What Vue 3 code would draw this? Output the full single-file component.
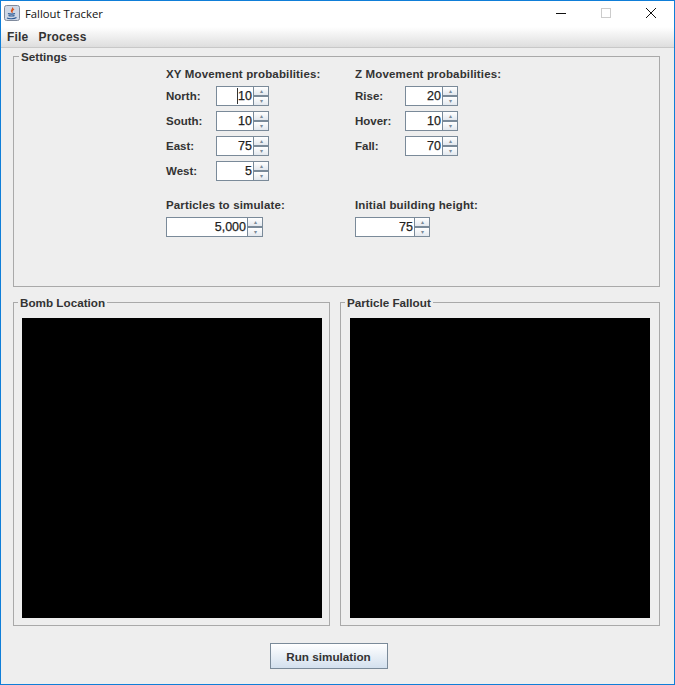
<template>
  <div class="window">
    <header class="titlebar">
      <svg class="app-icon" width="16" height="16" viewBox="0 0 16 16">
        <rect x="0.5" y="0.5" width="15" height="15" rx="2" fill="#cfd8e6" stroke="#7f8a9c" />
        <path d="M8.5 2.5c1 1.5-2 2.5-1 4 .3.5.8.8 1 1.2M10 4c-1 .8-2 1.300-1.500 2.500" fill="none" stroke="#d9541e" stroke-width="1.200" />
        <path d="M4 8.500c1 .8 6 .8 7 0M4.500 10.500c1 .7 5 .7 6 0M3 13c2 1 7 1 9.500-.5" fill="none" stroke="#2c5a94" stroke-width="1.100" />
      </svg>
      <span class="title">Fallout Tracker</span>
      <div class="controls">
        <span class="ctl"><svg width="12" height="12" viewBox="0 0 12 12"><path d="M1 6.500h10" stroke="#111" /></svg></span>
        <span class="ctl"><svg width="12" height="12" viewBox="0 0 12 12"><rect x="1.500" y="1.500" width="9" height="9" fill="none" stroke="#ccc" /></svg></span>
        <span class="ctl"><svg width="12" height="12" viewBox="0 0 12 12"><path d="M1 1l10 10M11 1L1 11" stroke="#111" /></svg></span>
      </div>
    </header>

    <nav class="menubar">
      <span>File</span>
      <span>Process</span>
    </nav>

    <main class="content">
      <fieldset class="group settings">
        <legend>Settings</legend>
        <div class="settings-grid">
          <section class="col">
            <h4>XY Movement probabilities:</h4>
            <div v-for="row in xyRows" :key="row.label" class="row">
              <label>{{ row.label }}</label>
              <div class="spinner">
                <div class="field" :class="{ caret: row.focus }"><span>{{ row.value }}</span></div>
                <div class="arrows"><button>&#9652;</button><button>&#9662;</button></div>
              </div>
            </div>
            <h4 class="second">Particles to simulate:</h4>
            <div class="spinner wide">
              <div class="field"><span>5,000</span></div>
              <div class="arrows"><button>&#9652;</button><button>&#9662;</button></div>
            </div>
          </section>

          <section class="col">
            <h4>Z Movement probabilities:</h4>
            <div v-for="row in zRows" :key="row.label" class="row">
              <label>{{ row.label }}</label>
              <div class="spinner">
                <div class="field"><span>{{ row.value }}</span></div>
                <div class="arrows"><button>&#9652;</button><button>&#9662;</button></div>
              </div>
            </div>
            <div class="row filler"></div>
            <h4 class="second">Initial building height:</h4>
            <div class="spinner mid">
              <div class="field"><span>75</span></div>
              <div class="arrows"><button>&#9652;</button><button>&#9662;</button></div>
            </div>
          </section>
        </div>
      </fieldset>

      <div class="panels">
        <fieldset class="group panel">
          <legend>Bomb Location</legend>
          <div class="canvas"></div>
        </fieldset>
        <fieldset class="group panel right">
          <legend>Particle Fallout</legend>
          <div class="canvas"></div>
        </fieldset>
      </div>

      <div class="actions">
        <button class="run">Run simulation</button>
      </div>
    </main>
  </div>
</template>

<script setup>
const xyRows = [
  { label: 'North:', value: 10, focus: true },
  { label: 'South:', value: 10 },
  { label: 'East:', value: 75 },
  { label: 'West:', value: 5 },
]

const zRows = [
  { label: 'Rise:', value: 20 },
  { label: 'Hover:', value: 10 },
  { label: 'Fall:', value: 70 },
]
</script>

<style>
html,
body {
  margin: 0;
  background: #eeeeee;
}
</style>

<style scoped>
.window {
  box-sizing: border-box;
  width: 675px;
  height: 685px;
  border: 1px solid #0f7ed8;
  background: #eeeeee;
  display: flex;
  flex-direction: column;
  font-family: "Liberation Sans", Arial, sans-serif;
  font-size: 12px;
  color: #333333;
  overflow: hidden;
}

.titlebar {
  box-sizing: border-box;
  height: 26px;
  flex: none;
  background: #ffffff;
  display: flex;
  align-items: center;
  padding: 0 1px 2px 3px;
}

.app-icon {
  margin-right: 5px;
}

.title {
  font-family: "Open Sans", "Noto Sans", sans-serif;
  font-size: 11.300px;
  color: #111111;
}

.controls {
  margin-left: auto;
  display: flex;
}

.ctl {
  width: 45px;
  height: 24px;
  display: flex;
  align-items: center;
  justify-content: center;
}

.menubar {
  height: 21px;
  flex: none;
  box-sizing: border-box;
  display: flex;
  align-items: center;
  gap: 10px;
  padding-left: 6px;
  background: linear-gradient(#ffffff, #dedede);
  border-bottom: 1px solid #c8c8c8;
  font-weight: bold;
  font-size: 12px;
  letter-spacing: 0.2px;
  color: #333333;
}

.content {
  flex: 1;
  display: flex;
  flex-direction: column;
  padding: 1px 14px 0 12px;
}

.group {
  margin: 0;
  padding: 0;
  box-sizing: border-box;
  border: 1px solid #a9a9a9;
  min-width: 0;
}

.group legend {
  padding: 0 2px;
  margin-left: 4px;
  font-weight: bold;
  font-size: 11.700px;
  line-height: 15px;
}

.settings {
  height: 238px;
}

.settings legend {
  margin-left: 5px;
}

.settings-grid {
  display: grid;
  grid-template-columns: 189px 1fr;
  padding: 3px 0 0 152px;
}

h4 {
  margin: 0 0 2px;
  font-size: 11.500px;
  letter-spacing: 0.15px;
  line-height: 14px;
  font-weight: bold;
}

h4.second {
  margin-top: 15px;
  margin-bottom: 5px;
}

.row {
  height: 25px;
  display: flex;
  align-items: center;
}

.row.filler {
  visibility: hidden;
}

.row label {
  width: 50px;
  font-weight: bold;
  font-size: 11.500px;
}

.spinner {
  display: flex;
  width: 53px;
  height: 20px;
}

.spinner.wide {
  width: 97px;
}

.spinner.mid {
  width: 75px;
}

.field {
  flex: 1;
  box-sizing: border-box;
  border: 1px solid #7a8a99;
  border-right: none;
  background: #ffffff;
  display: flex;
  align-items: center;
  justify-content: flex-end;
  padding-right: 1px;
  font-size: 12.500px;
  color: #222222;
  -webkit-text-stroke: 0.25px #222222;
}

.field.caret span {
  border-left: 1px solid #333333;
  line-height: 16px;
}

.arrows {
  width: 16px;
  flex: none;
  box-sizing: border-box;
  border: 1px solid #7a8a99;
  display: flex;
  flex-direction: column;
  background: #ffffff;
}

.arrows button {
  flex: 1;
  min-height: 0;
  padding: 0;
  border: none;
  font-size: 6px;
  line-height: 6px;
  color: #7a8a99;
  background: linear-gradient(#ffffff, #e3e8ee);
}

.arrows button + button {
  border-top: 2px solid #7a8a99;
}

.panels {
  display: flex;
  gap: 10px;
  margin-top: 8px;
}

.panel {
  width: 317px;
  height: 331px;
}

.panel.right {
  width: 320px;
}

.canvas {
  width: 300px;
  height: 300px;
  margin: 8px 0 0 8px;
  background: #000000;
}

.panel.right .canvas {
  margin-left: 9px;
}

.actions {
  display: flex;
  justify-content: center;
  margin: 17px 16px 0 0;
}

.run {
  width: 118px;
  height: 26px;
  padding: 0;
  border: 1px solid #7a8a99;
  background: linear-gradient(#ffffff, #d3e0ee);
  font-family: inherit;
  font-weight: bold;
  font-size: 11.700px;
  color: #333333;
}
</style>
